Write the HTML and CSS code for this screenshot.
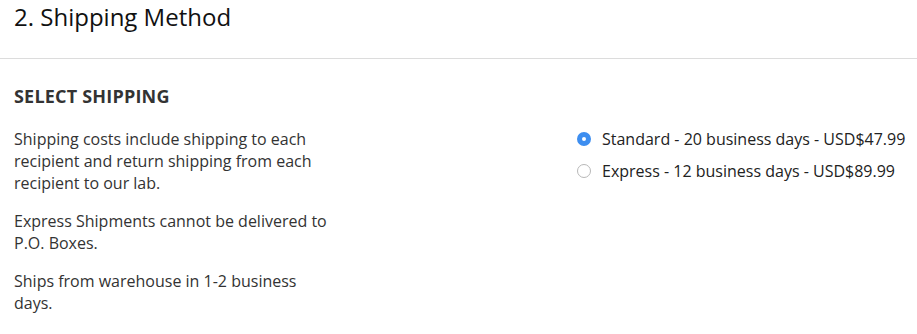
FILE: index.html
```html
<!DOCTYPE html>
<html lang="en">
<head>
  <meta charset="UTF-8" />
  <title>Shipping Method</title>
  <link rel="stylesheet" href="styles.css">
</head>
<body>
  <div class="step-header">
    <h2>2. Shipping Method</h2>
  </div>

  <div class="step-body">
    <h3>SELECT SHIPPING</h3>
    <div class="shipping-row">
      <div class="shipping-info">
        <p>Shipping costs include shipping to each recipient and return shipping from each recipient to our lab.</p>
        <p>Express Shipments cannot be delivered to P.O. Boxes.</p>
        <p>Ships from warehouse in 1-2 business days.</p>
      </div>
      <div class="shipping-options">
        <label class="option">
          <input type="radio" name="shipping" value="standard" checked />
          <span class="radio"></span>
          Standard - 20 business days - USD$47.99
        </label>
        <label class="option">
          <input type="radio" name="shipping" value="express" />
          <span class="radio"></span>
          Express - 12 business days - USD$89.99
        </label>
      </div>
    </div>
  </div>
</body>
</html>
```

FILE: styles.css
```css
body {
  margin: 0;
  font-family: "Open Sans", "Noto Sans", sans-serif;
  background-color: #fff;
  color: #333;
}

.step-header {
  padding: 0 14px;
  height: 58px;
  border-bottom: 1px solid #dcdcdc;
}

.step-header h2 {
  margin: 0;
  padding-top: 1px;
  font-size: 24px;
  font-weight: 500;
  line-height: 32px;
  color: #111;
}

.step-body {
  padding: 24px 14px 0;
}

.step-body h3 {
  margin: 0 0 19px;
  font-size: 18px;
  font-weight: 700;
  letter-spacing: 0.2px;
  line-height: 26px;
  color: #333;
}

.shipping-row {
  display: flex;
}

.shipping-info {
  flex: none;
  width: 322px;
  font-size: 16px;
  line-height: 22px;
}

.shipping-info p {
  margin: 0 0 16px;
}

.shipping-options {
  flex: none;
  margin-left: 241px;
}

.option {
  display: flex;
  align-items: center;
  height: 22px;
  margin-bottom: 10px;
  font-size: 16px;
  white-space: nowrap;
  color: #222;
  cursor: pointer;
}

.option input {
  display: none;
}

.radio {
  flex: none;
  width: 14px;
  height: 14px;
  box-sizing: border-box;
  border: 1px solid #b8b8b8;
  border-radius: 50%;
  background-color: #fff;
  margin-right: 11px;
}

.option input:checked + .radio {
  border: 5px solid #3d8ef0;
  background-color: #fff;
}
```
